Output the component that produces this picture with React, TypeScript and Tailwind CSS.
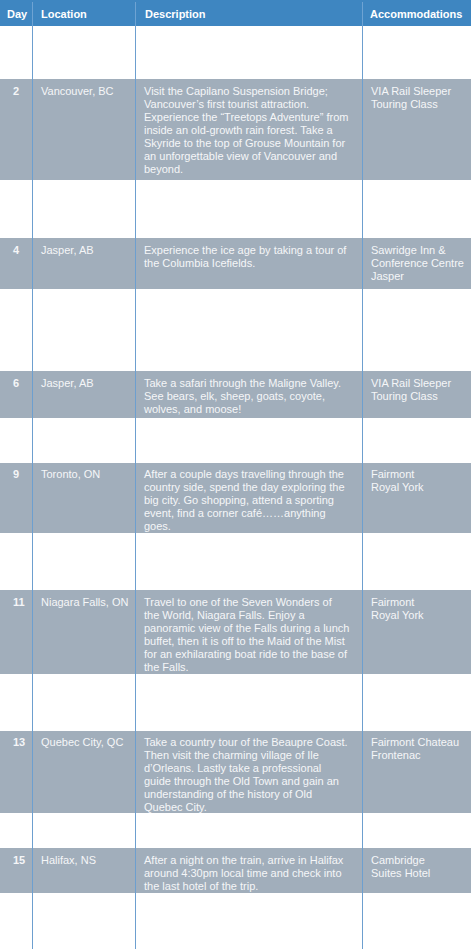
import React from "react";

type Row = {
  day?: string;
  location?: string;
  desc?: string[];
  acc?: string[];
  h: number;
  tight?: boolean;
};

const rows: Row[] = [
  { h: 53 },
  {
    day: "2",
    location: "Vancouver, BC",
    desc: [
      "Visit the Capilano Suspension Bridge;",
      "Vancouver’s first tourist attraction.",
      "Experience the “Treetops Adventure” from",
      "inside an old-growth rain forest. Take a",
      "Skyride to the top of Grouse Mountain for",
      "an unforgettable view of Vancouver and",
      "beyond.",
    ],
    acc: ["VIA Rail Sleeper", "Touring Class"],
    h: 101,
  },
  { h: 58 },
  {
    day: "4",
    location: "Jasper, AB",
    desc: ["Experience the ice age by taking a tour of", "the Columbia Icefields."],
    acc: ["Sawridge Inn &", "Conference Centre", "Jasper"],
    h: 51,
  },
  { h: 82 },
  {
    day: "6",
    location: "Jasper, AB",
    desc: [
      "Take a safari through the Maligne Valley.",
      "See bears, elk, sheep, goats, coyote,",
      "wolves, and moose!",
    ],
    acc: ["VIA Rail Sleeper", "Touring Class"],
    h: 47,
  },
  { h: 45 },
  {
    day: "9",
    location: "Toronto, ON",
    desc: [
      "After a couple days travelling through the",
      "country side, spend the day exploring the",
      "big city. Go shopping, attend a sporting",
      "event, find a corner café……anything",
      "goes.",
    ],
    acc: ["Fairmont", "Royal York"],
    h: 70,
    tight: true,
  },
  { h: 57 },
  {
    day: "11",
    location: "Niagara Falls, ON",
    desc: [
      "Travel to one of the Seven Wonders of",
      "the World, Niagara Falls. Enjoy a",
      "panoramic view of the Falls during a lunch",
      "buffet, then it is off to the Maid of the Mist",
      "for an exhilarating boat ride to the base of",
      "the Falls.",
    ],
    acc: ["Fairmont", "Royal York"],
    h: 84,
  },
  { h: 57 },
  {
    day: "13",
    location: "Quebec City, QC",
    desc: [
      "Take a country tour of the Beaupre Coast.",
      "Then visit the charming village of Ile",
      "d’Orleans. Lastly take a professional",
      "guide through the Old Town and gain an",
      "understanding of the history of Old",
      "Quebec City.",
    ],
    acc: ["Fairmont Chateau", "Frontenac"],
    h: 82,
    tight: true,
  },
  { h: 35 },
  {
    day: "15",
    location: "Halifax, NS",
    desc: [
      "After a night on the train, arrive in Halifax",
      "around 4:30pm local time and check into",
      "the last hotel of the trip.",
    ],
    acc: ["Cambridge", "Suites Hotel"],
    h: 45,
  },
  { h: 70 },
];

function Lines({ lines }: { lines?: string[] }) {
  if (!lines) return null;
  return (
    <>
      {lines.map((l, i) => (
        <div key={i} className="whitespace-nowrap">
          {l}
        </div>
      ))}
    </>
  );
}

export default function App() {
  return (
    <div
      className="w-[471px] min-h-[949px] bg-white text-[11px] leading-[13px] overflow-hidden"
      style={{ fontFamily: '"Liberation Sans", Arial, sans-serif' }}
    >
      <div className="grid grid-cols-[32px_103px_227px_109px] h-[26px] bg-[#3e86c1] text-white font-bold items-center pt-[2px]">
        <div className="pl-[7px]">Day</div>
        <div className="h-full flex items-center border-l border-[#6ea3d3] pl-[8px]">Location</div>
        <div className="h-full flex items-center border-l border-[#6ea3d3] pl-[9px]">Description</div>
        <div className="h-full flex items-center border-l border-[#6ea3d3] pl-[7px]">Accommodations</div>
      </div>
      {rows.map((r, i) => {
        const filled = !!r.day;
        const pt = r.tight ? "pt-[5px]" : "pt-[6px]";
        return (
          <div
            key={i}
            className={`grid grid-cols-[32px_103px_227px_109px] ${
              filled ? "bg-[#a1aebb] text-[#f5f6f8]" : "bg-white"
            }`}
            style={{ height: r.h }}
          >
            <div className={`pl-[13px] ${pt} font-bold`}>{r.day}</div>
            <div className={`border-l border-[#6d9fcf] pl-[8px] ${pt} whitespace-nowrap`}>
              {r.location}
            </div>
            <div className={`border-l border-[#6d9fcf] pl-[8px] ${pt}`}>
              <Lines lines={r.desc} />
            </div>
            <div className={`border-l border-[#6d9fcf] pl-[8px] ${pt}`}>
              <Lines lines={r.acc} />
            </div>
          </div>
        );
      })}
    </div>
  );
}
